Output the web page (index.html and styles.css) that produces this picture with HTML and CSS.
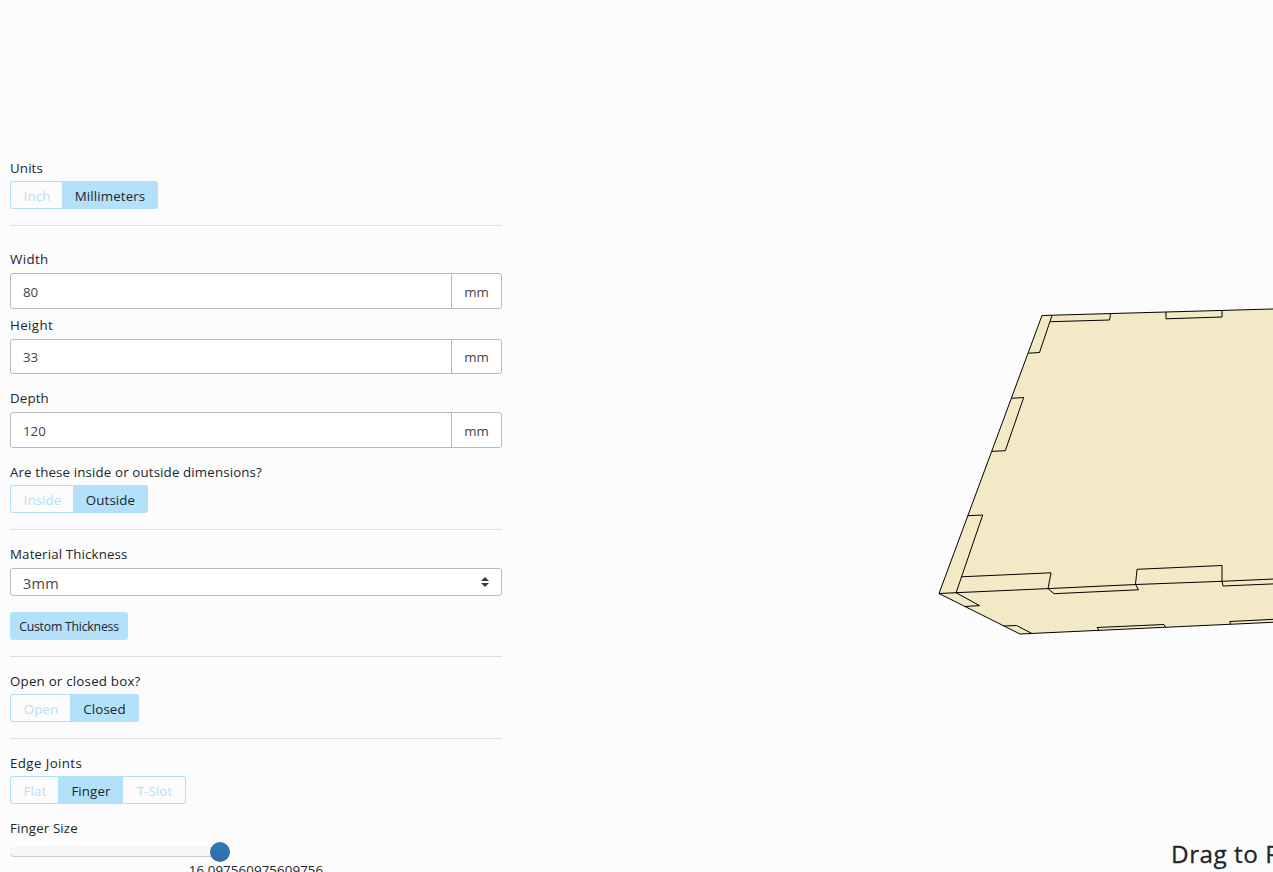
FILE: index.html
```html
<!DOCTYPE html>
<html lang="en">
<head>
<meta charset="utf-8">
<title>Box Designer</title>
<link rel="stylesheet" href="styles.css">
</head>
<body>
<main class="app">
  <form class="panel">
    <section class="section section-units">
      <div class="label">Units</div>
      <div class="group">
        <button type="button" class="option w-inch">Inch</button>
        <button type="button" class="option active w-mm">Millimeters</button>
      </div>
    </section>
    <section class="section section-size">
      <div class="label label-wide">Width</div>
      <div class="field"><input class="value" value="80"><span class="unit">mm</span></div>
      <div class="label label-wide label-height">Height</div>
      <div class="field field-height"><input class="value" value="33"><span class="unit">mm</span></div>
      <div class="label label-depth">Depth</div>
      <div class="field"><input class="value" value="120"><span class="unit">mm</span></div>
      <div class="label label-inside">Are these inside or outside dimensions?</div>
      <div class="group">
        <button type="button" class="option w-inside">Inside</button>
        <button type="button" class="option active w-outside">Outside</button>
      </div>
    </section>
    <section class="section">
      <div class="label label-material">Material Thickness</div>
      <div class="select"><span>3mm</span>
        <svg class="caret" width="8" height="10" viewBox="0 0 8 10"><path d="M4 0L8 4H0zM4 10L0 6H8z" fill="#343a40"/></svg>
      </div>
      <button type="button" class="custom">Custom Thickness</button>
    </section>
    <section class="section">
      <div class="label label-open">Open or closed box?</div>
      <div class="group">
        <button type="button" class="option w-open">Open</button>
        <button type="button" class="option active w-closed">Closed</button>
      </div>
    </section>
    <section class="section section-joints">
      <div class="label label-wide">Edge Joints</div>
      <div class="group">
        <button type="button" class="option w-flat">Flat</button>
        <button type="button" class="option active w-finger">Finger</button>
        <button type="button" class="option w-slot">T-Slot</button>
      </div>
      <div class="label label-finger">Finger Size</div>
      <div class="slider"><div class="track"></div><div class="thumb"></div></div>
      <div class="reading">16.097560975609756</div>
    </section>
  </form>
  <section class="viewer">
    <svg class="model" width="771" height="835" viewBox="502 0 771 835">
      <path class="face" d="M1290 308.5L1042 315.5L939 593.5L1020 634L1290 621.5z"/>
      <g class="edges">
        <path d="M1052 315.5L1039.5 352.5L1028.500 353.200"/>
        <path d="M1050.500 321.700L1109.500 320L1110.500 314"/>
        <path d="M1166 312L1166 318.800L1222 317L1222 310.500"/>
        <path d="M1011.500 398.300L1023.700 397.500L1005.300 450.700L992 451.400"/>
        <path d="M968 515.700L982.700 515L956 593"/>
        <path d="M939 593.500L956 592.700L1048 588.600L1136 584.500L1222 581.300L1290 578.300"/>
        <path d="M961 576.800L1051 572.800L1048 588.600L1054 593.700L1138.500 589.800L1135.500 584.500L1137 569.300L1222 565.500L1222 581.300L1223 586L1290 583.200"/>
        <path d="M956 592.700L979.500 605.600L964.500 606.500"/>
        <path d="M1003.500 626L1016.500 625.500L1032 633.500"/>
        <path d="M1099 630.200L1097 627.500L1164 624.500L1165.500 627.500"/>
        <path d="M1230.500 624.300L1229.800 621.500L1290 618.500"/>
      </g>
    </svg>
    <div class="hint">Drag to Rotate</div>
  </section>
</main>
</body>
</html>
```
FILE: styles.css
```css
* { box-sizing: border-box; }
html, body { height: 100%; }
body {
  margin: 0;
  overflow: hidden;
  background: #fcfcfc;
  color: #212529;
  font: 13.3px/20px "Open Sans", "Noto Sans", sans-serif;
}
button, input { font: inherit; color: inherit; }
.app { display: flex; height: 872px; overflow: hidden; }
.panel { flex: none; width: 502px; padding: 158px 0 0 10px; }
.section { padding-bottom: 16px; margin-bottom: 14px; border-bottom: 1px solid #dfdfdf; }
.section-units { margin-bottom: 23px; }
.section-joints { border: 0; }
.label { height: 20px; margin-bottom: 3px; white-space: nowrap; letter-spacing: .14px; }
.label-wide { letter-spacing: .4px; }
.label-open { letter-spacing: .22px; }
.group { display: flex; height: 28px; }
.option {
  height: 28px;
  padding: 1px 0 0 1px;
  border: 1px solid #b3e0fb;
  background: transparent;
  color: #b3e0fb;
  text-align: center;
  letter-spacing: .12px;
}
.option:first-child { border-radius: 3px 0 0 3px; border-right: 0; }
.option:last-child { border-radius: 0 3px 3px 0; border-left: 0; }
.active { background: #b3e0fb; color: #212529; }
.w-inch { width: 52px; }
.w-mm { width: 96px; }
.w-inside { width: 63px; }
.w-outside { width: 75px; }
.w-open { width: 60px; }
.w-closed { width: 69px; }
.w-flat { width: 48px; }
.w-finger { width: 65px; }
.w-slot { width: 63px; }
.section-size .label { margin-bottom: 4px; }
.section-size .label-inside { margin-bottom: 3px; }
.field { display: flex; height: 36px; border: 1px solid #b8b8b8; border-radius: 3px; background: #fff; color: #444; }
.value { flex: 1; min-width: 0; border: 0; padding: 2px 12px 0; background: transparent; outline: 0; }
.unit { width: 50px; border-left: 1px solid #b8b8b8; padding-top: 8px; text-align: center; }
.field-height { height: 35px; }
.field-height .value { padding-top: 0; }
.field-height .unit { padding-top: 7px; }
.label-height { margin-top: 6px; }
.label-depth { margin-top: 14px; }
.label-inside { margin-top: 14px; }
.section .label-material { margin-bottom: 4px; }
.select {
  display: flex;
  align-items: center;
  justify-content: space-between;
  height: 28px;
  padding: 3px 12px 0;
  border: 1px solid #b8b8b8;
  border-radius: 3px;
  background: #fff;
  color: #444;
  font-size: 14.5px;
  letter-spacing: .3px;
}
.caret { margin-bottom: 3px; }
.custom {
  display: block;
  width: 118px;
  height: 28px;
  margin-top: 16px;
  padding: 1px 0 0;
  border: 0;
  border-radius: 3px;
  background: #b3e0fb;
  font-size: 12.3px;
  letter-spacing: -.24px;
  white-space: nowrap;
}
.label-finger { margin-top: 14px; }
.slider { display: flex; align-items: center; height: 20px; }
.track { width: 210px; height: 10px; margin-right: -10px; border-radius: 4px; background: linear-gradient(#f5f5f5, #f9f9f9); box-shadow: inset 0 -1px 1px rgba(0,0,0,.2); }
.thumb { width: 20px; height: 20px; border-radius: 50%; background: linear-gradient(#337ab7, #2e6da4); }
.section-joints .label-finger { margin-bottom: 4px; }
.reading { width: 492px; text-align: center; line-height: 16px; letter-spacing: .1px; }
.viewer { flex: 1; min-width: 0; overflow: hidden; }
.model { display: block; }
.face { fill: #f3e9c6; stroke: #000; stroke-width: 1; }
.edges { fill: none; stroke: #000; stroke-width: 1; }
.hint {
  padding-left: 669px;
  font-size: 24.3px;
  line-height: 38px;
  font-weight: 500;
  letter-spacing: .5px;
  white-space: nowrap;
  -webkit-text-stroke: .3px #212529;
}
```
